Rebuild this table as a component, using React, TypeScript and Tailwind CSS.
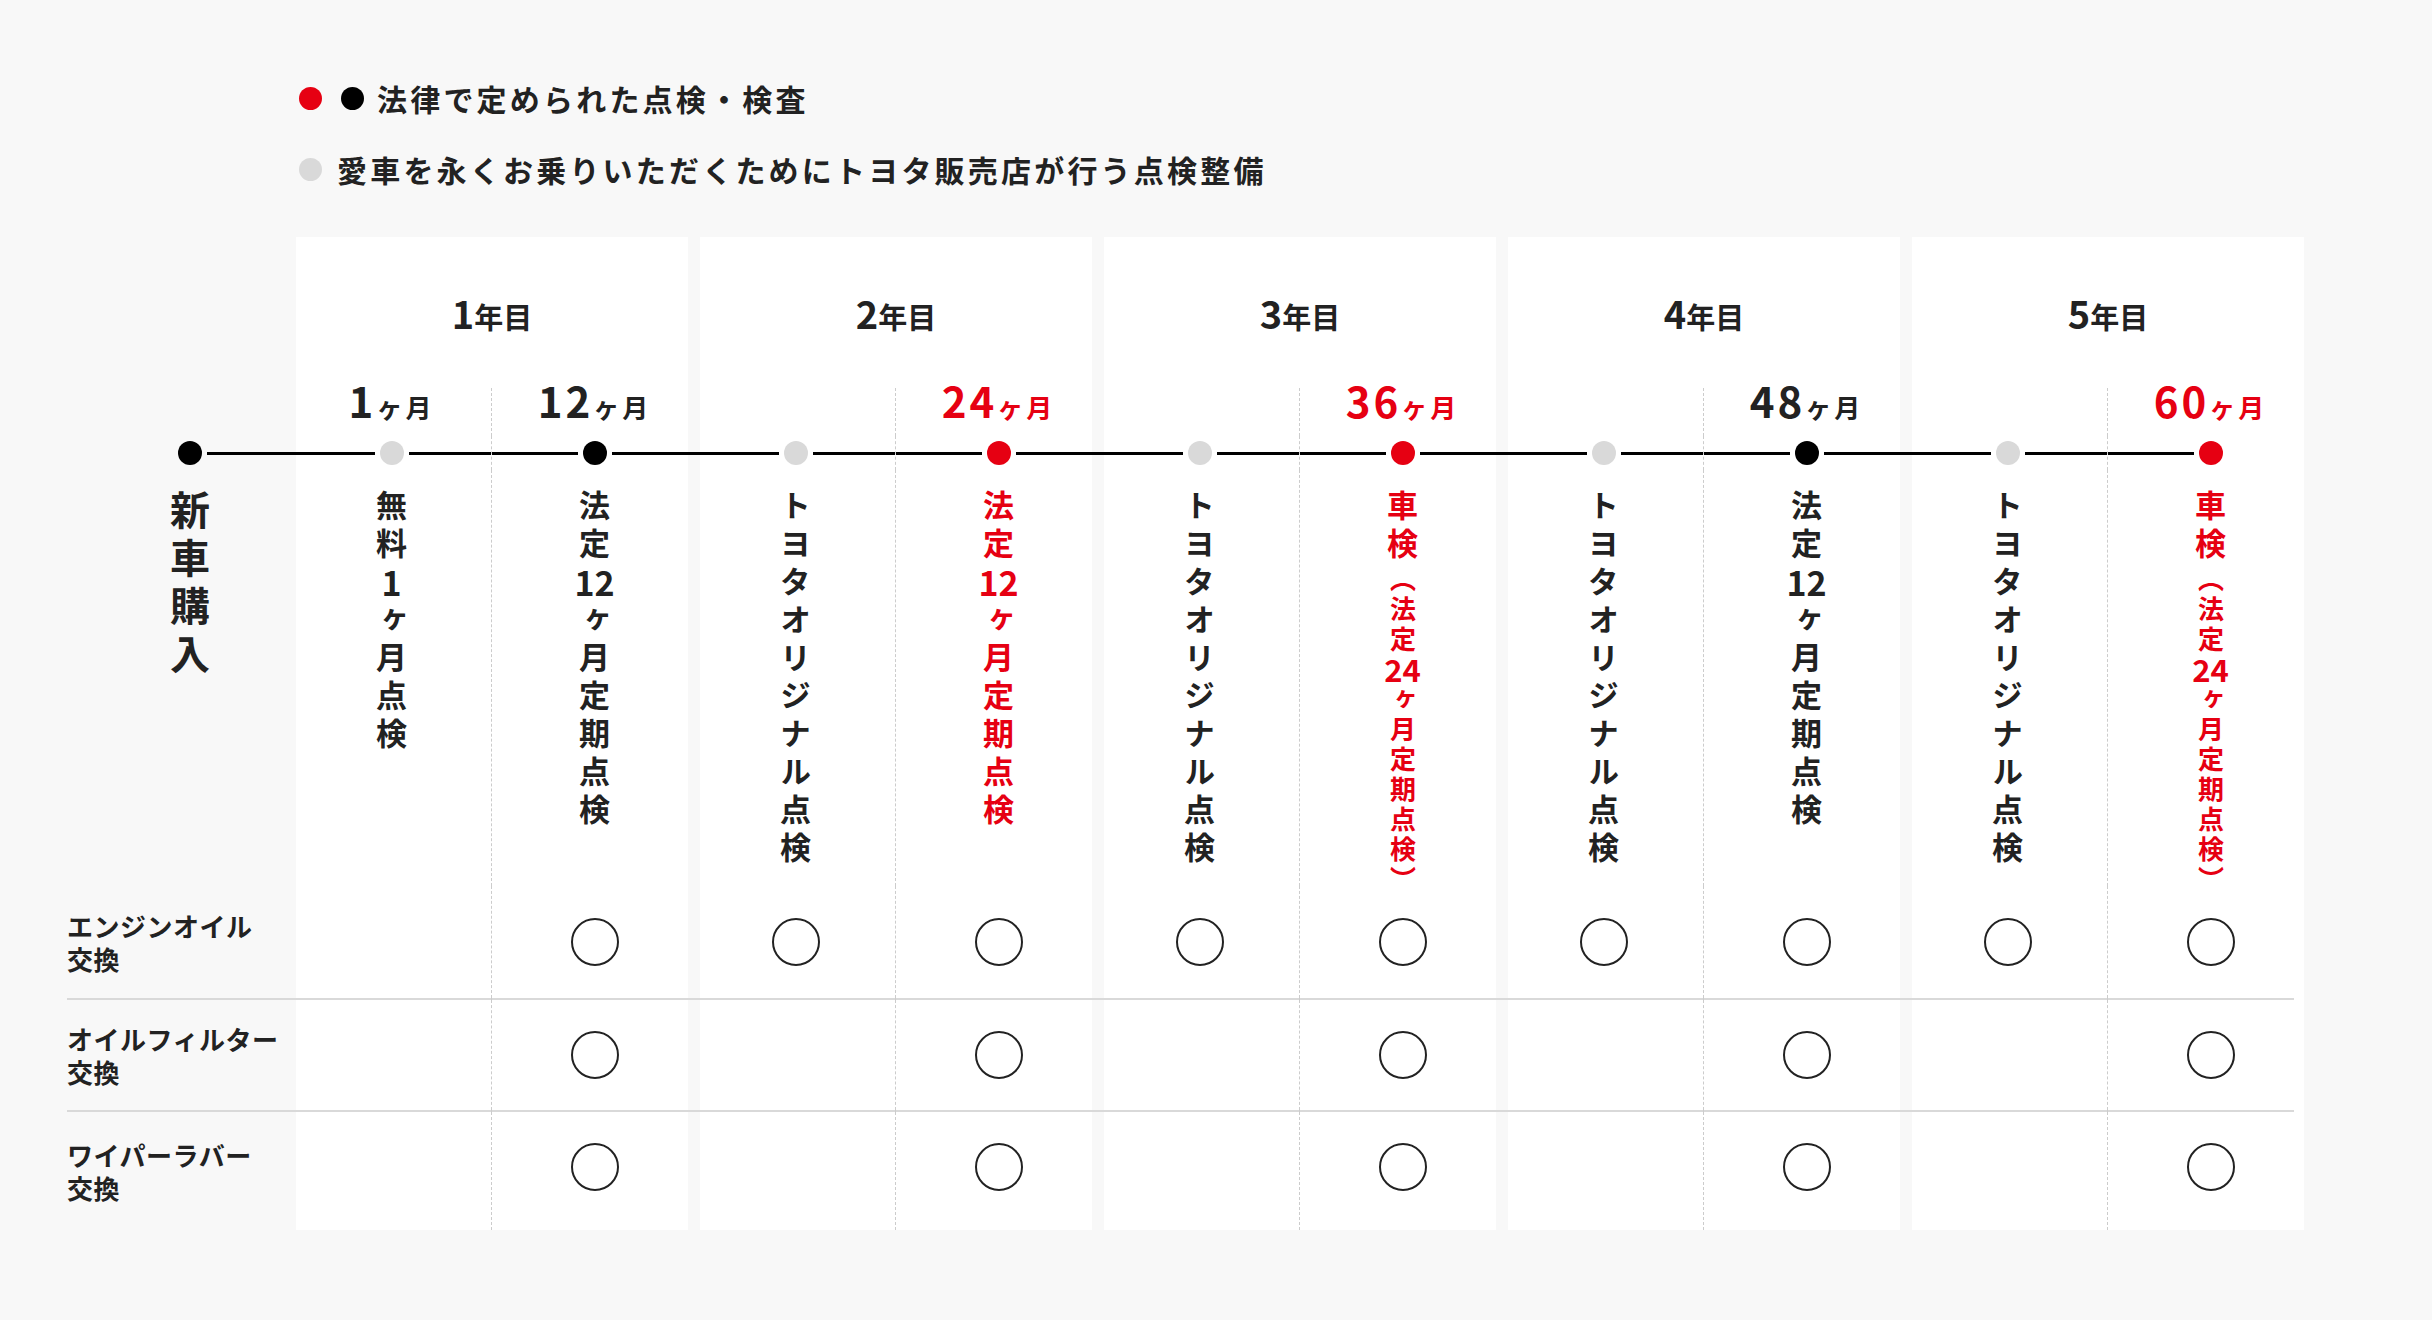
import { Fragment, type ReactNode } from "react";

type Seg = { t: "v" | "d" | "sv" | "sd"; s: string };
type Dot = "gray" | "black" | "red";

const toyota: Seg[] = [{ t: "v", s: "トヨタオリジナル点検" }];
const legal12: Seg[] = [
  { t: "v", s: "法定" },
  { t: "d", s: "12" },
  { t: "v", s: "ヶ月定期点検" },
];
const shaken: Seg[] = [
  { t: "v", s: "車検" },
  { t: "sv", s: "（法定" },
  { t: "sd", s: "24" },
  { t: "sv", s: "ヶ月定期点検）" },
];

const points: { m: string | null; dot: Dot; label: Seg[]; rows: boolean[] }[] = [
  {
    m: "1",
    dot: "gray",
    label: [
      { t: "v", s: "無料" },
      { t: "d", s: "1" },
      { t: "v", s: "ヶ月点検" },
    ],
    rows: [false, false, false],
  },
  { m: "12", dot: "black", label: legal12, rows: [true, true, true] },
  { m: null, dot: "gray", label: toyota, rows: [true, false, false] },
  { m: "24", dot: "red", label: legal12, rows: [true, true, true] },
  { m: null, dot: "gray", label: toyota, rows: [true, false, false] },
  { m: "36", dot: "red", label: shaken, rows: [true, true, true] },
  { m: null, dot: "gray", label: toyota, rows: [true, false, false] },
  { m: "48", dot: "black", label: legal12, rows: [true, true, true] },
  { m: null, dot: "gray", label: toyota, rows: [true, false, false] },
  { m: "60", dot: "red", label: shaken, rows: [true, true, true] },
];

const items = [
  ["エンジンオイル", "交換"],
  ["オイルフィルター", "交換"],
  ["ワイパーラバー", "交換"],
];

const dotColor: Record<Dot, string> = {
  gray: "bg-[#d9d9d9]",
  black: "bg-black",
  red: "bg-[#e60012]",
};

const divider = "border-r border-dashed border-[#cccccc]";

// left half of each year carries the dashed divider, right half sits a little off centre
const half = (i: number) => (i % 2 === 0 ? `${divider} pr-[4px]` : "pl-[9px]");

// one grid row: label column, then per year a 12px gap and two half columns
function gridRow(
  key: string,
  label: ReactNode,
  gap: (p: number) => ReactNode,
  sub: (i: number) => ReactNode,
) {
  return (
    <Fragment key={key}>
      {label}
      {[0, 1, 2, 3, 4].map((p) => (
        <Fragment key={p}>
          {gap(p)}
          {sub(p * 2)}
          {sub(p * 2 + 1)}
        </Fragment>
      ))}
    </Fragment>
  );
}

function VLabel({ segs, red }: { segs: Seg[]; red: boolean }) {
  return (
    <div
      className={`flex flex-col items-center font-bold ${red ? "text-[#e60012]" : "text-[#222]"}`}
    >
      {segs.map((seg, i) => {
        if (seg.t === "v")
          return (
            <span key={i} className="block [writing-mode:vertical-rl] text-[31px] leading-none tracking-[7px]">
              {seg.s}
            </span>
          );
        if (seg.t === "sv")
          return (
            <span key={i} className="block [writing-mode:vertical-rl] text-[26px] leading-none tracking-[4px]">
              {seg.s}
            </span>
          );
        if (seg.t === "d")
          return (
            <span key={i} className="block h-[38px] text-[34px] leading-[31px]">
              {seg.s}
            </span>
          );
        return (
          <span key={i} className="block h-[30px] text-[31px] leading-[26px]">
            {seg.s}
          </span>
        );
      })}
    </div>
  );
}

export default function App() {
  return (
    <div className="min-h-screen w-full bg-[#f8f8f8] font-['Noto_Sans_CJK_JP',sans-serif] text-[#222]">
      <div className="pl-[299px] pt-[78px] text-[30px] font-bold leading-[40px] tracking-[3.2px]">
        <div className="flex items-center">
          <span className="h-[23px] w-[23px] rounded-full bg-[#e60012]" />
          <span className="ml-[19px] h-[23px] w-[23px] rounded-full bg-black" />
          <span className="ml-[13px]">法律で定められた点検・検査</span>
        </div>
        <div className="mt-[31px] flex items-center">
          <span className="h-[23px] w-[23px] rounded-full bg-[#d9d9d9]" />
          <span className="ml-[15px]">愛車を永くお乗りいただくためにトヨタ販売店が行う点検整備</span>
        </div>
      </div>

      <div className="mt-[48px] grid grid-cols-[284px_12px_196px_196px_12px_196px_196px_12px_196px_196px_12px_196px_196px_12px_196px_196px]">
        {/* year headers */}
        <div className="h-[151px]" />
        {[0, 1, 2, 3, 4].map((p) => (
          <Fragment key={p}>
            <div />
            <div className="col-span-2 bg-white pt-[58px] text-center font-bold leading-[36px]">
              <span className="text-[38px]">{p + 1}</span>
              <span className="text-[29px]">年目</span>
            </div>
          </Fragment>
        ))}

        {/* months */}
        {gridRow(
          "months",
          <div />,
          (p) => <div key={`g${p}`} />,
          (i) => (
            <div
              key={i}
              className={`h-[48px] bg-white text-center font-bold leading-[24px] ${half(i)} ${points[i].dot === "red" ? "text-[#e60012]" : "text-[#222]"}`}
            >
              {points[i].m && (
                <span className="text-[42px] tracking-[3px]">
                  {points[i].m}
                  <span className="text-[26px] tracking-[3px]">ヶ月</span>
                </span>
              )}
            </div>
          ),
        )}

        {/* timeline */}
        {gridRow(
          "line",
          <div className="flex h-[34px] items-center">
            <span className="w-[178px]" />
            <span className="h-[24px] w-[24px] shrink-0 rounded-full bg-black" />
            <span className="ml-[5px] h-[3px] flex-1 bg-black" />
          </div>,
          (p) => (
            <div key={`g${p}`} className="flex items-center">
              <span className="h-[3px] flex-1 bg-black" />
            </div>
          ),
          (i) => (
            <div key={i} className={`flex items-center bg-white ${i % 2 === 0 ? divider : ""}`}>
              <span className={`h-[3px] grow bg-black ${i % 2 === 0 ? "basis-0" : "basis-[9px]"}`} />
              <span className={`mx-[5px] h-[24px] w-[24px] shrink-0 rounded-full ${dotColor[points[i].dot]}`} />
              <span
                className={`h-[3px] grow ${i % 2 === 0 ? "basis-[4px]" : "basis-0"} ${i === 9 ? "" : "bg-black"}`}
              />
            </div>
          ),
        )}

        {/* vertical labels */}
        {gridRow(
          "labels",
          <div className="h-[416px] pl-[170px] pt-[20px]">
            <span className="block [writing-mode:vertical-rl] text-[40px] font-bold leading-none tracking-[8px]">
              新車購入
            </span>
          </div>,
          (p) => <div key={`g${p}`} />,
          (i) => (
            <div key={i} className={`h-[416px] bg-white pt-[20px] ${half(i)}`}>
              <VLabel segs={points[i].label} red={points[i].dot === "red"} />
            </div>
          ),
        )}

        {/* maintenance rows */}
        {items.map((item, r) => (
          <Fragment key={r}>
            {r > 0 &&
              gridRow(
                `sep${r}`,
                <div className="ml-[67px] h-[2px] bg-[#d9d9d9]" />,
                (p) => <div key={`g${p}`} className="h-[2px] bg-[#d9d9d9]" />,
                (i) => (
                  <div key={i} className={`bg-white ${i % 2 === 0 ? divider : ""}`}>
                    <div className={`h-[2px] bg-[#d9d9d9] ${i === 9 ? "mr-[10px]" : ""}`} />
                  </div>
                ),
              )}
            {gridRow(
              `row${r}`,
              <div
                className={`flex flex-col justify-center pl-[67px] text-[26px] font-bold leading-[33px] tracking-[0.5px] ${r === 0 ? "h-[112px]" : r === 1 ? "h-[110px]" : "h-[118px]"}`}
              >
                <span>{item[0]}</span>
                <span>{item[1]}</span>
              </div>,
              (p) => <div key={`g${p}`} />,
              (i) => (
                <div
                  key={i}
                  className={`flex items-center justify-center bg-white ${r === 2 ? "pb-[8px]" : ""} ${half(i)}`}
                >
                  {points[i].rows[r] && (
                    <span className="h-[48px] w-[48px] rounded-full border-2 border-[#222]" />
                  )}
                </div>
              ),
            )}
          </Fragment>
        ))}
      </div>
    </div>
  );
}
